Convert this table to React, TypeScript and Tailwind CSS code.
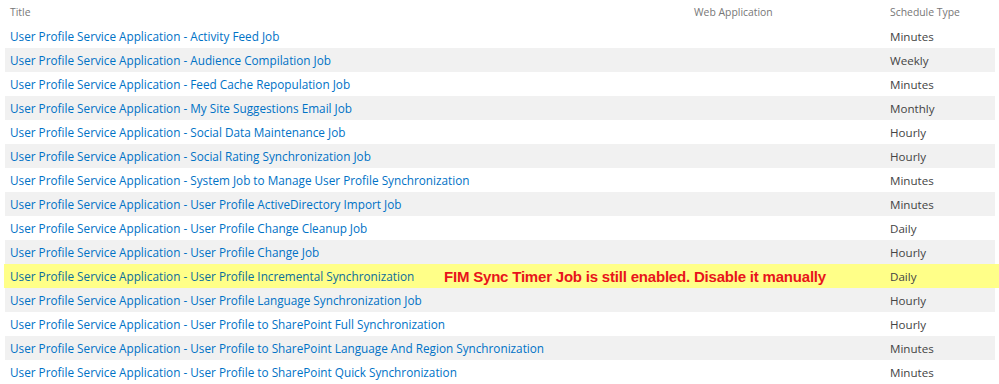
const jobs = [
  { title: 'User Profile Service Application - Activity Feed Job', schedule: 'Minutes' },
  { title: 'User Profile Service Application - Audience Compilation Job', schedule: 'Weekly' },
  { title: 'User Profile Service Application - Feed Cache Repopulation Job', schedule: 'Minutes' },
  { title: 'User Profile Service Application - My Site Suggestions Email Job', schedule: 'Monthly' },
  { title: 'User Profile Service Application - Social Data Maintenance Job', schedule: 'Hourly' },
  { title: 'User Profile Service Application - Social Rating Synchronization Job', schedule: 'Hourly' },
  { title: 'User Profile Service Application - System Job to Manage User Profile Synchronization', schedule: 'Minutes' },
  { title: 'User Profile Service Application - User Profile ActiveDirectory Import Job', schedule: 'Minutes' },
  { title: 'User Profile Service Application - User Profile Change Cleanup Job', schedule: 'Daily' },
  { title: 'User Profile Service Application - User Profile Change Job', schedule: 'Hourly' },
  { title: 'User Profile Service Application - User Profile Incremental Synchronization', schedule: 'Daily', flagged: true },
  { title: 'User Profile Service Application - User Profile Language Synchronization Job', schedule: 'Hourly' },
  { title: 'User Profile Service Application - User Profile to SharePoint Full Synchronization', schedule: 'Hourly' },
  { title: 'User Profile Service Application - User Profile to SharePoint Language And Region Synchronization', schedule: 'Minutes' },
  { title: 'User Profile Service Application - User Profile to SharePoint Quick Synchronization', schedule: 'Minutes' },
];

export default function App() {
  return (
    <div className="w-[999px] h-[384px] bg-white overflow-hidden font-['Open_Sans','Noto_Sans',sans-serif]">
      {/* Header */}
      <div className="grid grid-cols-[684px_196px_1fr] h-[24px] items-center pt-[2px] ml-[5px] mr-[4px] text-[10.4px] text-[#777]">
        <div className="px-[5px]">Title</div>
        <div className="px-[5px]">Web Application</div>
        <div className="px-[5px]">Schedule Type</div>
      </div>

      {jobs.map((job, idx) => (
        <div
          key={job.title}
          className={
            job.flagged
              ? 'relative grid grid-cols-[685px_196px_1fr] h-[24px] items-center pt-[2px] ml-[4px] bg-[#ffff88]'
              : `relative grid grid-cols-[684px_196px_1fr] h-[24px] items-center pt-[2px] ml-[5px] mr-[4px] ${idx % 2 === 1 ? 'bg-[#f1f1f1]' : ''}`
          }
        >
          <div className={`px-[5px] whitespace-nowrap text-[11.75px] ${job.flagged ? 'pl-[6px] text-[#0b6e9c]' : 'text-[#0072c6]'}`}>
            {job.title}
          </div>
          <div className="px-[5px]" />
          <div className="px-[5px] text-[11.6px] text-[#444]">{job.schedule}</div>
          {job.flagged && (
            <span className="absolute left-[440px] top-[2px] text-[15px] font-bold text-[#e8141b] font-['Liberation_Sans',Arial,sans-serif] tracking-[-0.2px]">
              FIM Sync Timer Job is still enabled. Disable it manually
            </span>
          )}
        </div>
      ))}
    </div>
  );
}
